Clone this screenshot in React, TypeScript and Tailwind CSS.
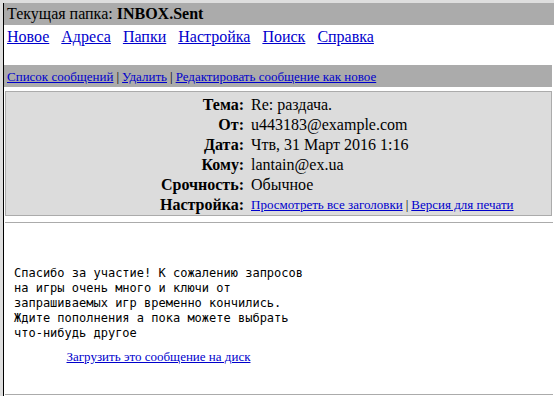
import React from "react";

const navLinks = ["Новое", "Адреса", "Папки", "Настройка", "Поиск", "Справка"];

const headers = [
  { label: "Тема:", value: "Re: раздача." },
  { label: "От:", value: "u443183@example.com" },
  { label: "Дата:", value: "Чтв, 31 Март 2016 1:16" },
  { label: "Кому:", value: "lantain@ex.ua" },
  { label: "Срочность:", value: "Обычное" },
];

const bodyText = `Спасибо за участие! К сожалению запросов
на игры очень много и ключи от
запрашиваемых игр временно кончились.
Ждите пополнения а пока можете выбрать
что-нибудь другое`;

export default function App() {
  return (
    <div className="w-[554px] h-[396px] overflow-hidden bg-[#dedede] pt-[3px] pl-[3px] font-['Liberation_Serif','Times_New_Roman',serif] text-black">
      <div className="h-full bg-white border-l border-black flex flex-col">
        <div className="h-[22px] shrink-0 bg-[#ababab] pl-[3px] flex items-center text-[16px] leading-[18px]">
          Текущая папка:&nbsp;<b>INBOX.Sent</b>
        </div>

        <div className="h-[40px] shrink-0 pt-[3px] pl-[3px] flex gap-[12px] text-[16px] leading-[18px]">
          {navLinks.map((l) => (
            <a key={l} className="text-[#0000cc] underline">
              {l}
            </a>
          ))}
        </div>

        <div className="h-[22px] shrink-0 mr-[2px] bg-[#ababab] pl-[3px] flex items-center text-[13px] leading-[15px] pt-[1px]">
          <a className="text-[#0000cc] underline">Список сообщений</a>
          <span className="px-[3px]">|</span>
          <a className="text-[#0000cc] underline">Удалить</a>
          <span className="px-[3px]">|</span>
          <a className="text-[#0000cc] underline">Редактировать сообщение как новое</a>
        </div>

        <div className="mt-[4px] ml-[1px] mr-[2px] shrink-0 border border-[#ababab] bg-[#dcdcdc] pt-[3px]">
          <div className="grid grid-cols-[238px_1fr] gap-x-[7px] text-[16px]">
            {headers.map((h) => (
              <React.Fragment key={h.label}>
                <div className="h-[20px] flex items-center justify-end font-bold">{h.label}</div>
                <div className="h-[20px] flex items-center">{h.value}</div>
              </React.Fragment>
            ))}
            <div className="h-[20px] flex items-center justify-end font-bold">Настройка:</div>
            <div className="h-[20px] flex items-center text-[13px]">
              <a className="text-[#0000cc] underline">Просмотреть все заголовки</a>
              <span className="px-[3px]">|</span>
              <a className="text-[#0000cc] underline">Версия для печати</a>
            </div>
          </div>
        </div>

        <div className="mt-[6px] ml-[1px] mr-[1px] mb-[1px] flex-1 border-y border-[#ababab] pl-[9px] pt-[37px]">
          <div className="inline-flex flex-col items-center">
            <pre className="font-['DejaVu_Sans_Mono',monospace] text-[12px] leading-[15px] whitespace-pre self-start">
              {bodyText}
            </pre>
            <a className="mt-[8px] text-[13px] leading-[15px] text-[#0000cc] underline">
              Загрузить это сообщение на диск
            </a>
          </div>
        </div>
      </div>
    </div>
  );
}
